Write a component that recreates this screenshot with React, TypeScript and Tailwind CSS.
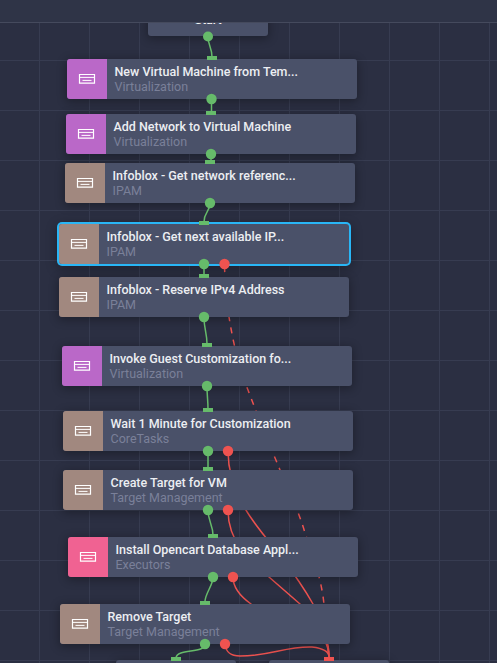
type Task = {
  x: number;
  y: number;
  title: string;
  kind: string;
  color: string;
  inX: number;
  outX: number;
  failX?: number;
  selected?: boolean;
};

const PURPLE = "bg-[#ba68c8]";
const BROWN = "bg-[#a1887f]";
const PINK = "bg-[#f06292]";

const tasks: Task[] = [
  { x: 67, y: 59, title: "New Virtual Machine from Tem...", kind: "Virtualization", color: PURPLE, inX: 207, outX: 211.5 },
  { x: 66, y: 114, title: "Add Network to Virtual Machine", kind: "Virtualization", color: PURPLE, inX: 206, outX: 211 },
  { x: 65, y: 163, title: "Infoblox - Get network referenc...", kind: "IPAM", color: BROWN, inX: 205, outX: 210 },
  { x: 59, y: 224, title: "Infoblox - Get next available IP...", kind: "IPAM", color: BROWN, inX: 199, outX: 204, failX: 224.5, selected: true },
  { x: 59, y: 277, title: "Infoblox - Reserve IPv4 Address", kind: "IPAM", color: BROWN, inX: 199, outX: 204 },
  { x: 62, y: 346, title: "Invoke Guest Customization fo...", kind: "Virtualization", color: PURPLE, inX: 202, outX: 207 },
  { x: 63, y: 411, title: "Wait 1 Minute for Customization", kind: "CoreTasks", color: BROWN, inX: 203, outX: 208, failX: 228 },
  { x: 63, y: 470, title: "Create Target for VM", kind: "Target Management", color: BROWN, inX: 203, outX: 208, failX: 228 },
  { x: 68, y: 537, title: "Install Opencart Database Appl...", kind: "Executors", color: PINK, inX: 208, outX: 213, failX: 233 },
  { x: 60, y: 604, title: "Remove Target", kind: "Target Management", color: BROWN, inX: 200, outX: 205, failX: 225 },
];

const successEdges = [
  "M208 37 C208 45 212 48 212 57",
  "M211.5 99 V112",
  "M211 154 V161",
  "M210 203 C210 212 204 212 204 222",
  "M204 264 V275",
  "M204 317 C204 329 207 333 207 344",
  "M207 386 C207 396 208 400 208 409",
  "M208 451 V468",
  "M208 510 C208 521 213 525 213 535",
  "M213 577 C213 586 205 593 205 602",
  "M205 644 C205 654 177 648 176 658",
];

const failureEdges = [
  "M228 451 C228 500 264 534 280 555 C292 571 304 588 313 604 C324 623 328 640 329 657",
  "M228 510 C228 546 256 566 269 577 L300 604 C319 621 329 634 329 657",
  "M233 577 C233 590 244 599 251 604 C282 626 329 620 329 657",
  "M225 644 C226 653 231 656 240 656 C270 656 286 646 312 647 C321 648 329 650 329 657",
];

function FormIcon() {
  return (
    <svg className="-mt-px -ml-px" width="18" height="12" viewBox="0 0 18 12" fill="none" stroke="#fff">
      <path d="M1.5 1.5H16.5V10.2H1.5Z" strokeWidth="1.2" />
      <path d="M1 4.4H17M4.5 7.4H13.5" />
    </svg>
  );
}

function TaskCard({ task }: { task: Task }) {
  return (
    <div
      className={`absolute flex h-10 w-[290px] overflow-hidden rounded-[3px] bg-[#4a5169] ${
        task.selected
          ? "shadow-[0_0_0_2px_#29b6f6,0_3px_12px_2px_rgba(0,0,0,0.3)]"
          : "shadow-[0_2px_10px_1px_rgba(0,0,0,0.3)]"
      }`}
      style={{ left: task.x, top: task.y }}
    >
      <div className={`flex w-10 shrink-0 items-center justify-center ${task.color}`}>
        <FormIcon />
      </div>
      <div className="flex flex-col pt-[5px] pl-[7.5px] whitespace-nowrap">
        <span className="text-[12.5px] leading-[15px] font-medium tracking-[-0.01px] text-[#eceef2]">{task.title}</span>
        <span className="text-[12.5px] leading-[15px] text-[#7a8099]">{task.kind}</span>
      </div>
    </div>
  );
}

function Stub({ x }: { x: number }) {
  return <div className="absolute h-10 w-[120px] rounded-[3px] bg-[#4a5169] shadow-[0_2px_10px_1px_rgba(0,0,0,0.3)]" style={{ left: x, top: 660 }} />;
}

export default function App() {
  return (
    <div className="flex h-[663px] w-[497px] flex-col overflow-hidden bg-[#2b2f42] font-['Roboto','Noto_Sans',sans-serif]">
      <header className="h-[23px] shrink-0 border-b border-[#454a5d] bg-[#2f3447]" />
      <main className="relative flex-1 overflow-hidden">
        <div className="absolute -top-[23px] left-0 h-[700px] w-[497px]">
          <svg className="absolute inset-0" width="497" height="700">
            <defs>
              <pattern id="grid" x="39" y="10" width="50" height="50" patternUnits="userSpaceOnUse">
                <path d="M.5 0V50M0 .5H50" stroke="#373c51" />
              </pattern>
            </defs>
            <rect width="497" height="700" fill="url(#grid)" />
          </svg>

          <div className="absolute top-[-4px] left-[148px] flex h-10 w-[120px] items-center justify-center rounded-[3px] bg-[#4a5169] pt-[8px] text-[12.5px] font-medium text-[#f2f3f5] shadow-[0_2px_10px_1px_rgba(0,0,0,0.3)]">
            Start
          </div>

          {/* Failure routes run underneath the task cards */}
          <svg className="absolute inset-0" width="497" height="700" fill="none" stroke="#ef5350" strokeWidth="1.5">
            {failureEdges.map((d) => (
              <path key={d} d={d} />
            ))}
            <path
              d="M224.5 264 C225 285 226 304 229 317 C233 342 239 368 248 390 C260 422 271 448 280 470 C290 494 299 512 305 533 C312 553 322 580 324 605 L329 657"
              strokeDasharray="6.2 6.2"
              strokeDashoffset="-1.8"
            />
          </svg>

          {tasks.map((task) => (
            <TaskCard key={task.y} task={task} />
          ))}
          <Stub x={116} />
          <Stub x={269} />

          <svg className="absolute inset-0" width="497" height="700">
            <g fill="none" stroke="#66bb6a" strokeWidth="1.5">
              {successEdges.map((d) => (
                <path key={d} d={d} />
              ))}
            </g>
            <g fill="#66bb6a">
              <circle cx="208" cy="36.5" r="5" />
              {tasks.map((task) => (
                <g key={task.y}>
                  <rect x={task.inX} y={task.y - 3} width="10" height="4" />
                  <circle cx={task.outX} cy={task.y + 40} r="5.2" />
                </g>
              ))}
              <rect x="171" y="657" width="10" height="4" />
            </g>
            <g fill="#ef5350">
              {tasks.map((task) => task.failX !== undefined && <circle key={task.y} cx={task.failX} cy={task.y + 40} r="5.2" />)}
              <rect x="324" y="657" width="10" height="4" />
            </g>
          </svg>
        </div>
      </main>
    </div>
  );
}
